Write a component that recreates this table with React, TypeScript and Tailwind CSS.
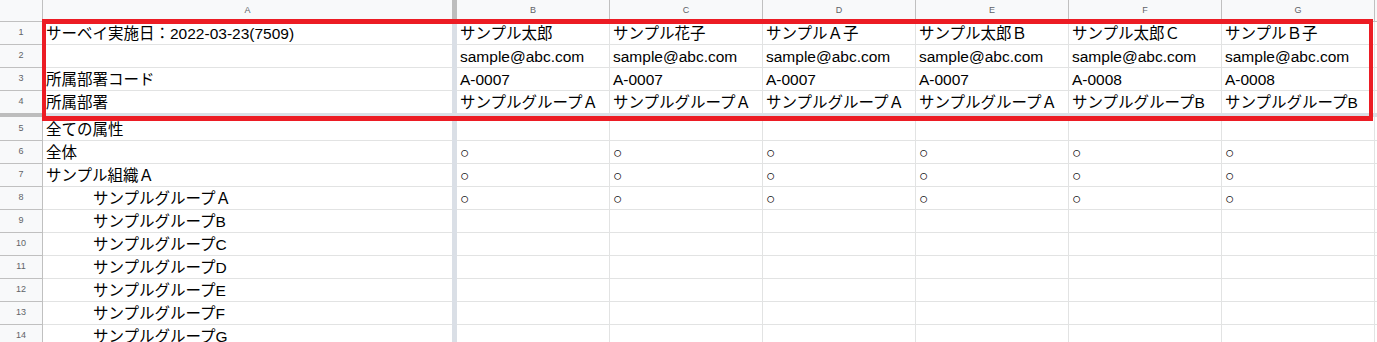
const cols = ["B", "C", "D", "E", "F", "G", "H"];

type Row = {
  n: number;
  a: string;
  indent?: boolean;
  cells: string[];
};

const mark = ["○", "○", "○", "○", "○", "○"];

const frozenRows: Row[] = [
  {
    n: 1,
    a: "サーベイ実施日：2022-03-23(7509)",
    cells: ["サンプル太郎", "サンプル花子", "サンプルＡ子", "サンプル太郎Ｂ", "サンプル太郎Ｃ", "サンプルＢ子"],
  },
  { n: 2, a: "", cells: Array(6).fill("sample@abc.com") },
  { n: 3, a: "所属部署コード", cells: ["A-0007", "A-0007", "A-0007", "A-0007", "A-0008", "A-0008"] },
  {
    n: 4,
    a: "所属部署",
    cells: [
      "サンプルグループＡ",
      "サンプルグループＡ",
      "サンプルグループＡ",
      "サンプルグループＡ",
      "サンプルグループB",
      "サンプルグループB",
    ],
  },
];

const bodyRows: Row[] = [
  { n: 5, a: "全ての属性", cells: [] },
  { n: 6, a: "全体", cells: mark },
  { n: 7, a: "サンプル組織Ａ", cells: mark },
  { n: 8, a: "サンプルグループＡ", indent: true, cells: mark },
  { n: 9, a: "サンプルグループB", indent: true, cells: [] },
  { n: 10, a: "サンプルグループC", indent: true, cells: [] },
  { n: 11, a: "サンプルグループD", indent: true, cells: [] },
  { n: 12, a: "サンプルグループE", indent: true, cells: [] },
  { n: 13, a: "サンプルグループF", indent: true, cells: [] },
  { n: 14, a: "サンプルグループG", indent: true, cells: [] },
];

function SheetRow({ row, height, last }: { row: Row; height: string; last?: boolean }) {
  const line = last ? "" : "border-b";
  return (
    <div className={`flex shrink-0 ${height}`}>
      <div
        className={`w-[43px] shrink-0 bg-[#f8f9fa] border-r ${line} border-[#c0c0c0] flex items-center justify-center text-[9px] text-[#5f6368]`}
      >
        {row.n}
      </div>
      <div
        className={`w-[409px] shrink-0 ${line} border-[#e2e3e3] flex items-end pb-[2px] whitespace-nowrap ${
          row.indent ? "pl-[50px]" : "pl-[3px]"
        }`}
      >
        <span className="leading-[17px]">{row.a}</span>
      </div>
      <div className="w-[5px] shrink-0 bg-[#dadfe6]" />
      {cols.map((c, i) => (
        <div
          key={c}
          className={`w-[153px] shrink-0 border-r ${line} border-[#e2e3e3] flex items-end pb-[2px] pl-[3px] whitespace-nowrap`}
        >
          <span className="leading-[17px]">{row.cells[i] ?? ""}</span>
        </div>
      ))}
    </div>
  );
}

export default function App() {
  return (
    <div className="relative w-[1377px] h-[342px] overflow-hidden bg-white text-black text-[15.5px] font-['Liberation_Sans','Noto_Sans_CJK_JP',sans-serif]">
      <div className="flex flex-col">
        {/* column letters */}
        <div className="flex shrink-0 h-[22px] bg-[#f8f9fa] text-[9px] text-[#5f6368]">
          <div className="w-[43px] shrink-0 border-r border-b border-[#c0c0c0]" />
          <div className="w-[409px] shrink-0 border-b border-[#c0c0c0] flex items-center justify-center">A</div>
          <div className="w-[5px] shrink-0 bg-[#bdbdbd]" />
          {cols.map((c) => (
            <div
              key={c}
              className="w-[153px] shrink-0 border-r border-b border-[#c0c0c0] flex items-center justify-center"
            >
              {c === "H" ? "" : c}
            </div>
          ))}
        </div>

        {frozenRows.map((r, i) => (
          <SheetRow key={r.n} row={r} height={i === 3 ? "h-[22px]" : "h-[23px]"} last={i === 3} />
        ))}

        {/* freeze bar */}
        <div className="flex shrink-0 h-[4px]">
          <div className="w-[43px] shrink-0 bg-[#bdbdbd]" />
          <div className="flex-1 bg-[#dadfe6]" />
        </div>

        {bodyRows.map((r, i) => (
          <SheetRow key={r.n} row={r} height={i === 0 ? "h-[24px]" : "h-[23px]"} />
        ))}
      </div>

      {/* red annotation box */}
      <div className="absolute left-[42px] top-[19px] w-[1331px] h-[102px] border-x-[4px] border-y-[5px] border-[#ec1c24] pointer-events-none" />
    </div>
  );
}
